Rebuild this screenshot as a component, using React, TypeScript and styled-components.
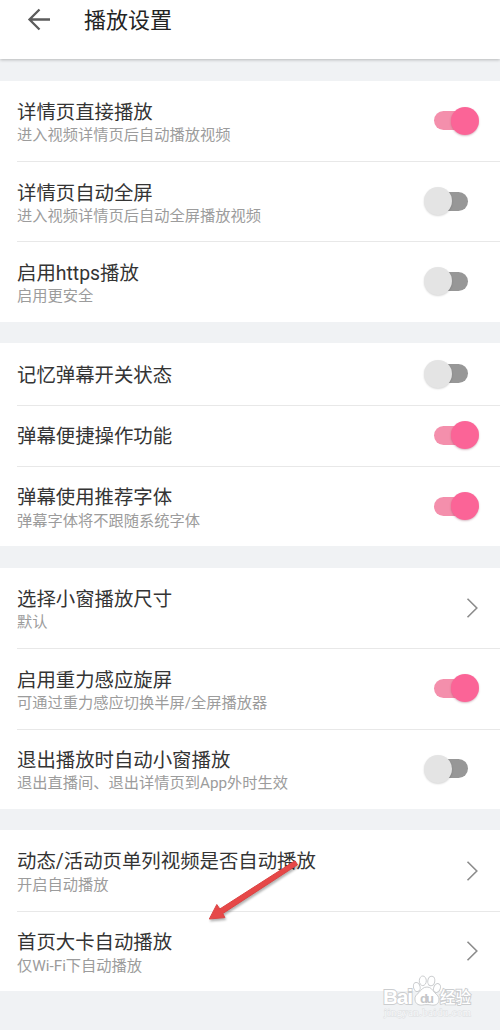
import React from "react";
import styled, { createGlobalStyle } from "styled-components";

const GlobalStyle = createGlobalStyle`
  body {
    margin: 0;
    background: #f0f2f4;
    font-family: Roboto, "Noto Sans CJK SC", sans-serif;
  }
`;

const Page = styled.main`
  position: relative;
  width: 500px;
  height: 1030px;
  overflow: hidden;
  background: #f0f2f4;
`;

const Header = styled.header`
  display: flex;
  align-items: center;
  box-sizing: border-box;
  height: 59px;
  padding: 0 0 19px 27px;
  background: #fff;
  box-shadow: 0 1px 3px rgba(0, 0, 0, 0.24);
  margin-bottom: 22px;
`;

const BackIcon = styled.svg`
  width: 24px;
  height: 24px;
  margin-right: 33px;
`;

const Heading = styled.h1`
  margin: 0;
  padding-top: 2px;
  font-size: 22px;
  line-height: 30px;
  font-weight: 400;
  color: #242424;
`;

const Group = styled.section`
  background: #fff;
  margin-bottom: 21.8px;
`;

const Row = styled.div<{ $compact: boolean }>`
  display: flex;
  align-items: center;
  justify-content: space-between;
  box-sizing: border-box;
  height: ${(p) => (p.$compact ? 61.4 : 80.2)}px;
  margin-left: 17px;

  & + & {
    border-top: 1px solid #e8e8e8;
  }
`;

const Labels = styled.div`
  padding-top: 3px;
  white-space: nowrap;
`;

const Title = styled.div`
  font-size: 19.4px;
  line-height: 26px;
  color: #343434;
`;

const Note = styled.div`
  margin-top: -0.5px;
  font-size: 15.25px;
  line-height: 20px;
  color: #9c9c9c;
`;

const Switch = styled.span<{ $on: boolean }>`
  position: relative;
  flex: none;
  width: 34px;
  height: 19px;
  margin: 0 32px 1px 0;
  border-radius: 10px;
  background: ${(p) => (p.$on ? "#f48fac" : "#979797")};

  &::after {
    content: "";
    position: absolute;
    top: -4.5px;
    left: ${(p) => (p.$on ? 16.5 : -10.5)}px;
    width: 28px;
    height: 28px;
    border-radius: 50%;
    background: ${(p) => (p.$on ? "#fb6497" : "#e4e4e4")};
    box-shadow: 0 1px 2px ${(p) => (p.$on ? "rgba(120, 30, 60, 0.3)" : "rgba(0, 0, 0, 0.16)")};
  }
`;

const Chevron = styled.svg`
  flex: none;
  width: 12px;
  height: 22px;
  margin-right: 22px;
`;

const Pointer = styled.svg`
  position: absolute;
  left: 200px;
  top: 850px;
  width: 110px;
  height: 80px;
  filter: drop-shadow(1px 2px 1px rgba(0, 0, 0, 0.3));
`;

const Watermark = styled.div`
  position: absolute;
  left: 382px;
  top: 974px;
  width: 96px;
  height: 46px;

  svg {
    display: block;
  }
`;

type Item = { title: string; note?: string; on?: boolean };

const groups: Item[][] = [
  [
    { title: "详情页直接播放", note: "进入视频详情页后自动播放视频", on: true },
    { title: "详情页自动全屏", note: "进入视频详情页后自动全屏播放视频", on: false },
    { title: "启用https播放", note: "启用更安全", on: false },
  ],
  [
    { title: "记忆弹幕开关状态", on: false },
    { title: "弹幕便捷操作功能", on: true },
    { title: "弹幕使用推荐字体", note: "弹幕字体将不跟随系统字体", on: true },
  ],
  [
    { title: "选择小窗播放尺寸", note: "默认" },
    { title: "启用重力感应旋屏", note: "可通过重力感应切换半屏/全屏播放器", on: true },
    { title: "退出播放时自动小窗播放", note: "退出直播间、退出详情页到App外时生效", on: false },
  ],
  [
    { title: "动态/活动页单列视频是否自动播放", note: "开启自动播放" },
    { title: "首页大卡自动播放", note: "仅Wi-Fi下自动播放" },
  ],
];

function SettingRow({ title, note, on }: Item) {
  return (
    <Row $compact={!note}>
      <Labels>
        <Title>{title}</Title>
        {note && <Note>{note}</Note>}
      </Labels>
      {on === undefined ? (
        <Chevron viewBox="0 0 12 22" fill="none" stroke="#8c8c8c" strokeWidth="1.6">
          <path d="M1.5 1.8 10.8 11 1.5 20.2" />
        </Chevron>
      ) : (
        <Switch $on={on} role="switch" aria-checked={on} />
      )}
    </Row>
  );
}

export default function App() {
  return (
    <Page>
      <GlobalStyle />
      <Header>
        <BackIcon viewBox="0 0 24 24" fill="none" stroke="#5c5c5c" strokeWidth="2.3">
          <path d="M23 11.5H2.5M12.5 1.5l-10 10 10 10" />
        </BackIcon>
        <Heading>播放设置</Heading>
      </Header>
      {groups.map((items, i) => (
        <Group key={i}>
          {items.map((item) => (
            <SettingRow key={item.title} {...item} />
          ))}
        </Group>
      ))}
      <Pointer viewBox="0 0 110 80">
        <path d="M95 10.800 97.500 14.800 22.800 63.500 24.800 67.600 9.300 69 16.800 54.500 19.800 59Z" fill="#e64848" stroke="#dc4545" strokeWidth="1" strokeLinejoin="round" />
      </Pointer>
      <Watermark>
        <svg width="96" height="46" viewBox="0 0 96 46" fill="#fff" stroke="#cbcdcf" strokeWidth="1">
          <g fontFamily="Liberation Sans, sans-serif" fontWeight="700" paintOrder="stroke" strokeWidth="1.8">
            <text x="1" y="30" fontSize="21" textLength="30">Bai</text>
            <text x="58" y="29" fontSize="15.5" fontWeight="500" fontFamily="Noto Sans CJK SC, sans-serif">经验</text>
            <text x="2" y="42" fontSize="10.5" fontWeight="400" fontFamily="Liberation Serif, serif" fill="#f8f9fa" strokeWidth="0.9" stroke="#dcdee0" textLength="87">jingyan.baidu.com</text>
          </g>
          <ellipse cx="34.800" cy="13" rx="3.3" ry="4.6" transform="rotate(-15 34.8 13)" />
          <ellipse cx="40.800" cy="6.800" rx="3.5" ry="4.8" />
          <ellipse cx="49.300" cy="7" rx="3.5" ry="4.8" transform="rotate(10 49.3 7)" />
          <ellipse cx="55" cy="14" rx="3.3" ry="4.6" transform="rotate(20 55 14)" />
          <path d="M45 13c-4 0-6 3-8 5.500-3 2.500-4.500 4-4 7.500.7 4.500 4.500 5.500 7.500 5 3-.5 6-.5 9 0 3.500.6 7-.5 7.500-5 .4-3.500-2-5-4.500-7.500-2-2.500-3.500-5.500-7.500-5.500Z" />
          <text x="38" y="29" fontFamily="Liberation Sans, sans-serif" fontSize="13" fontWeight="700" fill="#c4c6c8" stroke="none" textLength="14">du</text>
        </svg>
      </Watermark>
    </Page>
  );
}
